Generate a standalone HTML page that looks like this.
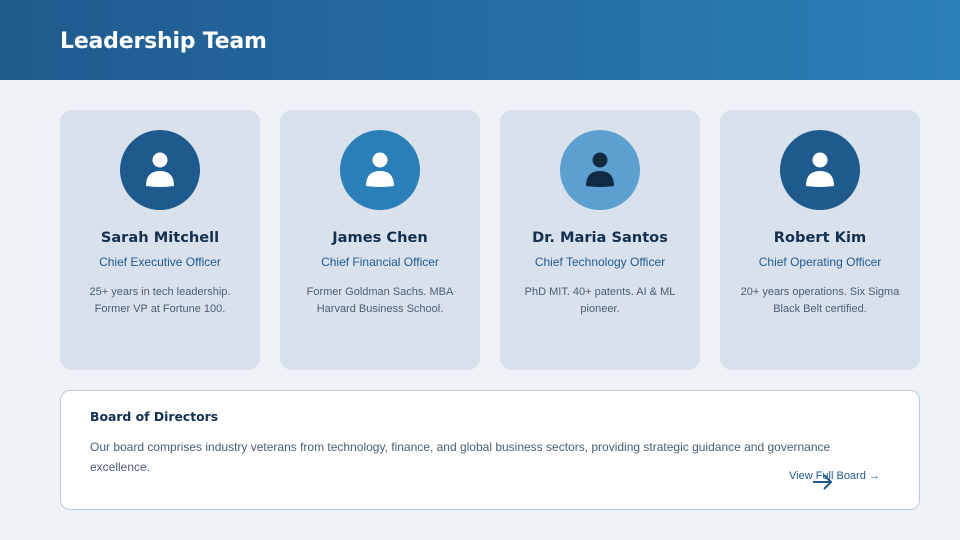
<!DOCTYPE html>
<html><head><meta charset="utf-8"><style>
*{margin:0;padding:0;box-sizing:border-box}
body{width:960px;height:540px;overflow:hidden;background:#eff3f8;font-family:"Liberation Sans",sans-serif;position:relative}
.hdr{position:absolute;left:0;top:0;width:960px;height:80px;background:linear-gradient(90deg,#1f5a8e,#2b7fb8)}
.hdr h1{position:absolute;left:60px;top:29px;font-size:22px;color:#fff;font-family:"DejaVu Sans","Liberation Sans",sans-serif;font-weight:bold;letter-spacing:-0.2px}
.card{position:absolute;top:110px;width:200px;height:260px;background:#d9e1ec;border-radius:12px;text-align:center}
.av{position:absolute;left:60px;top:20px;width:80px;height:80px;border-radius:50%}
.av svg{position:absolute;left:0;top:0}
.nm{position:absolute;left:0;width:200px;top:119px;font-family:"DejaVu Sans","Liberation Sans",sans-serif;font-weight:bold;font-size:14.6px;color:#13304f}
.rl{position:absolute;left:0;width:200px;top:145px;font-size:12px;color:#1f5a8e}
.ds{position:absolute;left:20px;width:160px;top:174px;font-size:11px;line-height:17px;color:#4a5d74}
.board{position:absolute;left:60px;top:390px;width:860px;height:120px;background:#fff;border:1px solid #bccadb;border-radius:10px}
.board h2{position:absolute;left:29px;top:18px;font-family:"DejaVu Sans","Liberation Sans",sans-serif;font-size:12.4px;color:#13304f;font-weight:bold}
.board p{position:absolute;left:29px;top:46px;width:770px;font-size:12px;line-height:20px;color:#4a5d74}
.lnk{position:absolute;left:728px;top:79px;font-size:11px;color:#1f5a8e}
</style></head><body>
<div class="hdr"><h1>Leadership Team</h1></div>

<div class="card" style="left:60px"><div class="av" style="background:#1f5a8e"><svg width="80" height="80"><circle cx="40" cy="30" r="7.5" fill="#fff"/><path d="M26 56 Q26 41 40 41 Q54 41 54 56 Q40 58 26 56Z" fill="#fff"/></svg></div>
<div class="nm">Sarah Mitchell</div><div class="rl">Chief Executive Officer</div><div class="ds">25+ years in tech leadership. Former VP at Fortune 100.</div></div>

<div class="card" style="left:280px"><div class="av" style="background:#2b7fb8"><svg width="80" height="80"><circle cx="40" cy="30" r="7.5" fill="#fff"/><path d="M26 56 Q26 41 40 41 Q54 41 54 56 Q40 58 26 56Z" fill="#fff"/></svg></div>
<div class="nm">James Chen</div><div class="rl">Chief Financial Officer</div><div class="ds">Former Goldman Sachs. MBA Harvard Business School.</div></div>

<div class="card" style="left:500px"><div class="av" style="background:#5ba0cf"><svg width="80" height="80"><circle cx="40" cy="30" r="7.5" fill="#0f2a44"/><path d="M26 56 Q26 41 40 41 Q54 41 54 56 Q40 58 26 56Z" fill="#0f2a44"/></svg></div>
<div class="nm">Dr. Maria Santos</div><div class="rl">Chief Technology Officer</div><div class="ds">PhD MIT. 40+ patents. AI &amp; ML pioneer.</div></div>

<div class="card" style="left:720px"><div class="av" style="background:#1f5a8e"><svg width="80" height="80"><circle cx="40" cy="30" r="7.5" fill="#fff"/><path d="M26 56 Q26 41 40 41 Q54 41 54 56 Q40 58 26 56Z" fill="#fff"/></svg></div>
<div class="nm">Robert Kim</div><div class="rl">Chief Operating Officer</div><div class="ds">20+ years operations. Six Sigma Black Belt certified.</div></div>

<div class="board"><h2>Board of Directors</h2>
<p>Our board comprises industry veterans from technology, finance, and global business sectors, providing strategic guidance and governance excellence.</p>
<div class="lnk">View Full Board →</div>
<svg style="position:absolute;left:751px;top:82px" width="22" height="18"><path d="M1 9 H19 M12 2 L19 9 L12 16" stroke="#1f5a8e" stroke-width="2" fill="none"/></svg>
</div>
</body></html>
